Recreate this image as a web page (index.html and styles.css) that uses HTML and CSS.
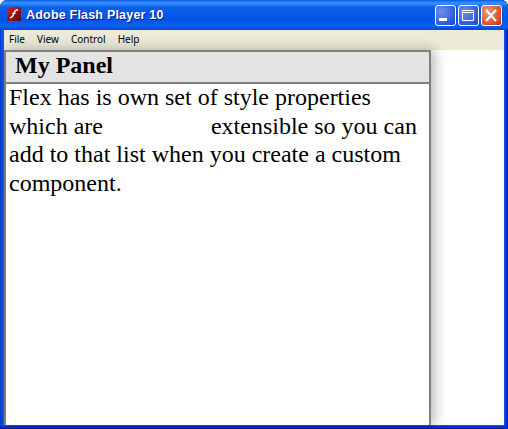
FILE: index.html
```html
<!DOCTYPE html>
<html lang="en">
<head>
<meta charset="utf-8">
<title>Adobe Flash Player 10</title>
<link rel="stylesheet" href="styles.css">
</head>
<body>
<div class="window">
  <header class="titlebar">
    <svg class="app-icon" width="14" height="14" viewBox="0 0 14 14">
      <defs>
        <linearGradient id="flash" x1="0" y1="0" x2="1" y2="1">
          <stop offset="0" stop-color="#d8232a"/>
          <stop offset="1" stop-color="#5c0508"/>
        </linearGradient>
      </defs>
      <rect width="14" height="14" fill="url(#flash)"/>
      <path d="M11 2.8C8.3 2.8 7.5 4.4 6.8 6.5 6.1 8.7 5.5 10.5 3 10.8" fill="none" stroke="#fff" stroke-width="1.5"/>
      <path d="M5.2 6.4h3.4" stroke="#fff" stroke-width="1.1"/>
    </svg>
    <span class="title">Adobe Flash Player 10</span>
    <div class="controls">
      <button class="ctl">
        <svg width="21" height="21" viewBox="0 0 21 21"><rect x="4" y="13" width="8" height="3" fill="#fff"/></svg>
      </button>
      <button class="ctl">
        <svg width="21" height="21" viewBox="0 0 21 21"><path d="M4.5 7.5h11v8h-11zM4.5 5.5h11v2h-11z" fill="none" stroke="#fff"/></svg>
      </button>
      <button class="ctl ctl-close">
        <svg width="21" height="21" viewBox="0 0 21 21"><path d="M5 5l10 11M15 5L5 16" stroke="#fff" stroke-width="2.2"/></svg>
      </button>
    </div>
  </header>
  <nav class="menubar">
    <span>File</span><span>View</span><span>Control</span><span>Help</span>
  </nav>
  <main class="stage">
    <section class="panel">
      <h1 class="panel-title">My Panel</h1>
      <div class="panel-body">
        <p class="panel-text">Flex has is own set of style properties <span class="gap-after">which are</span> extensible so you can add to that list when you create a custom component.</p>
      </div>
    </section>
  </main>
</div>
</body>
</html>
```
FILE: styles.css
```css
html, body {
  margin: 0;
  padding: 0;
  height: 100%;
  overflow: hidden;
}
.window {
  box-sizing: border-box;
  width: 508px;
  height: 429px;
  display: flex;
  flex-direction: column;
  padding: 0 4px 4px;
  background: linear-gradient(90deg, #0831d9 0, #0a55ea 2px, #0a55ea 100%);
  box-shadow: inset -1px 0 #0019a8, inset -3px 0 #0033d8, inset 0 -1px #001ea0, inset 0 -3px #0030d0;
  border-radius: 7px 7px 0 0;
}
.titlebar {
  margin: 0 -4px;
  padding: 0 4px 0 7px;
  height: 30px;
  flex: none;
  display: flex;
  align-items: center;
  background: linear-gradient(180deg, #0a5ae6 0, #3a93ff 3px, #0a5fe8 7px, #0255e5 20px, #0a63f0 26px, #0446d0 30px);
  border-radius: 7px 7px 0 0;
}
.app-icon {
  flex: none;
  margin-bottom: 2px;
}
.title {
  margin-left: 5px;
  font: bold 12.5px "Liberation Sans", sans-serif;
  color: #fff;
  letter-spacing: 0.2px;
  text-shadow: 1px 1px #0f1089;
}
.controls {
  margin-left: auto;
  display: flex;
  gap: 2px;
  margin-right: 2px;
}
.ctl {
  box-sizing: border-box;
  width: 21px;
  height: 21px;
  padding: 0;
  border: 1px solid #fff;
  border-radius: 3px;
  background: radial-gradient(circle at 30% 30%, #6f92ec, #2a56d8 75%, #1d3fbc);
  display: block;
  overflow: hidden;
}
.ctl svg {
  display: block;
  margin: -1px;
}
.ctl-close {
  background: radial-gradient(circle at 30% 30%, #e8987c, #d8502c 70%, #b83418);
}
.menubar {
  flex: none;
  height: 20px;
  display: flex;
  align-items: center;
  gap: 12px;
  padding: 0 0 2px 5px;
  box-sizing: border-box;
  background: #ece9d8;
  font: 10px "Noto Sans", sans-serif;
  color: #000;
}
.stage {
  flex: 1;
  min-height: 0;
  background: #fff;
  display: flex;
}
.panel {
  box-sizing: border-box;
  width: 427px;
  height: 375px;
  display: flex;
  flex-direction: column;
  border: 2px solid #808080;
  border-bottom: 0;
  box-shadow: 4px 0 12px rgba(0, 0, 0, 0.28);
  background: linear-gradient(180deg, #e4e4e4, #d6d6d6);
}
.panel-title {
  flex: none;
  margin: 0;
  height: 30px;
  padding-left: 9px;
  font: bold 24px/27px "Liberation Serif", serif;
  color: #000;
}
.panel-body {
  flex: 1;
  padding: 0 3px;
  background: #fff;
  border-top: 2px solid #808080;
}
.panel-text {
  margin: -1px 0 0;
  font: 24px/28.7px "Liberation Serif", serif;
  color: #000;
}
.gap-after {
  margin-right: 102px;
}
```
